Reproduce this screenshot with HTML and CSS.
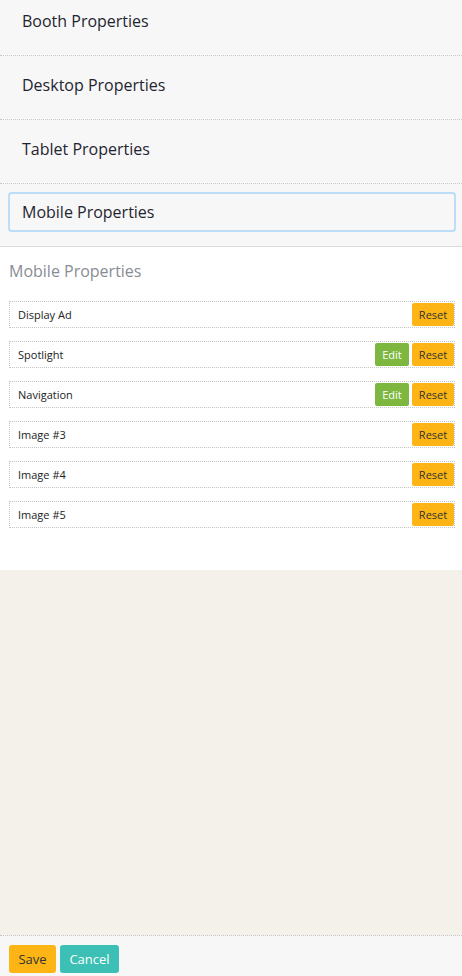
FILE: index.html
```html
<!DOCTYPE html>
<html>
<head>
<meta charset="utf-8">
<link rel="stylesheet" href="styles.css">
</head>
<body>
<div class="page">
  <div class="main">
    <div class="accordion">
      <div class="acc-head first">Booth Properties</div>
      <div class="acc-head">Desktop Properties</div>
      <div class="acc-head">Tablet Properties</div>
      <div class="acc-head active"><div class="focus-box">Mobile Properties</div></div>
      <div class="panel">
        <h2 class="panel-title">Mobile Properties</h2>
        <div class="rows">
          <div class="row"><span class="label">Display Ad</span><div class="actions"><button class="btn reset">Reset</button></div></div>
          <div class="row"><span class="label">Spotlight</span><div class="actions"><button class="btn edit">Edit</button><button class="btn reset">Reset</button></div></div>
          <div class="row"><span class="label">Navigation</span><div class="actions"><button class="btn edit">Edit</button><button class="btn reset">Reset</button></div></div>
          <div class="row"><span class="label">Image #3</span><div class="actions"><button class="btn reset">Reset</button></div></div>
          <div class="row"><span class="label">Image #4</span><div class="actions"><button class="btn reset">Reset</button></div></div>
          <div class="row"><span class="label">Image #5</span><div class="actions"><button class="btn reset">Reset</button></div></div>
        </div>
      </div>
    </div>
  </div>
  <div class="footer">
    <button class="fbtn save">Save</button>
    <button class="fbtn cancel">Cancel</button>
  </div>
</div>
</body>
</html>
```
FILE: styles.css
```css
html, body {
  margin: 0;
  padding: 0;
}
body {
  font-family: "Open Sans", "DejaVu Sans", sans-serif;
  background: #f4f1eb;
  color: #222;
  overflow: hidden;
}
.page {
  height: 976px;
  display: flex;
  flex-direction: column;
}
.main {
  flex: 1;
  overflow: hidden;
}
.accordion {
  margin-top: -8px;
}
.acc-head {
  height: 64px;
  box-sizing: border-box;
  background: #f7f7f7;
  border-bottom: 1px dotted #c8c8c8;
  display: flex;
  align-items: center;
  padding: 0 0 5px 22px;
  font-size: 16px;
  color: #1f2530;
}
.acc-head.active {
  padding: 8px 6px 0 8px;
  align-items: flex-start;
  border-bottom: 1px solid #dcdcdc;
  height: 63px;
}
.focus-box {
  flex: 1;
  height: 40px;
  box-sizing: border-box;
  border: 2px solid #bcdcf8;
  border-radius: 4px;
  display: flex;
  align-items: center;
  padding-left: 12px;
}
.panel {
  background: #fff;
  padding: 12px 7px 42px 9px;
}
.panel-title {
  margin: 0 0 18px 0;
  font-weight: normal;
  font-size: 16px;
  color: #888d95;
  line-height: 24px;
}
.rows {
  display: flex;
  flex-direction: column;
  gap: 13px;
}
.row {
  height: 27px;
  box-sizing: border-box;
  border: 1px dotted #c4c4c4;
  display: flex;
  align-items: center;
  justify-content: space-between;
  padding-left: 8px;
}
.label {
  font-size: 11px;
  color: #222;
}
.actions {
  display: flex;
  gap: 3px;
  height: 100%;
}
.btn {
  font-family: "Open Sans", "DejaVu Sans", sans-serif;
  font-size: 11px;
  border: 0;
  border-radius: 2px;
  height: 23px;
  margin-top: 1px;
  padding: 0 4px;
  cursor: pointer;
}
.btn.reset {
  background: #fdb515;
  color: #333;
  width: 42px;
}
.btn.edit {
  background: #7db73f;
  color: #fff;
  width: 34px;
}
.footer {
  height: 41px;
  box-sizing: border-box;
  border-top: 1px dotted #c4c4c4;
  background: #f7f7f7;
  display: flex;
  align-items: flex-start;
  gap: 4px;
  padding: 9px 0 0 9px;
}
.fbtn {
  font-family: "Open Sans", "DejaVu Sans", sans-serif;
  font-size: 13px;
  border: 0;
  border-radius: 3px;
  height: 28px;
  padding: 0 6px;
}
.fbtn.save {
  background: #fdb515;
  color: #333;
  width: 47px;
}
.fbtn.cancel {
  background: #3cbfb4;
  color: #fff;
  width: 59px;
}
```
